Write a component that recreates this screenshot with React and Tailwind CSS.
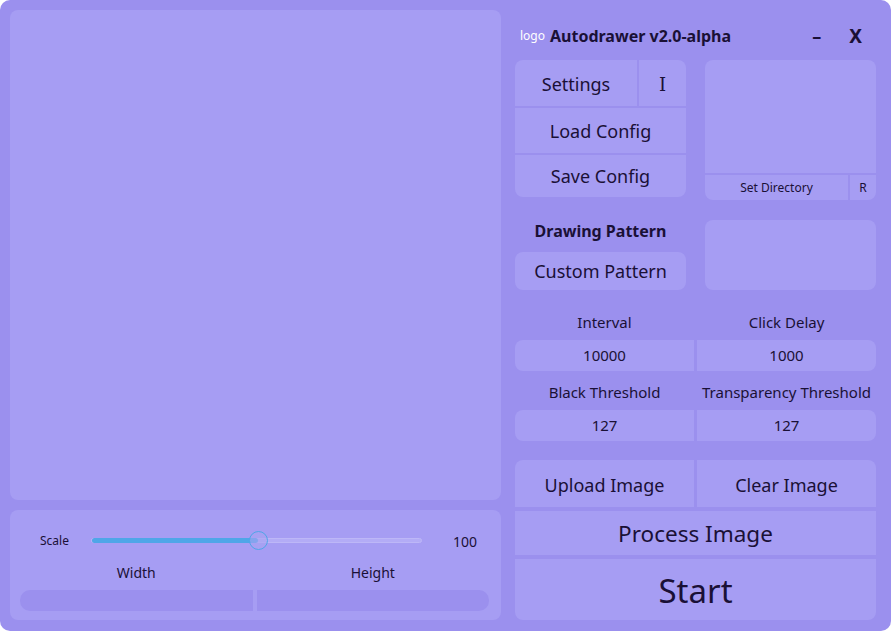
import React from 'react';

const panel = 'bg-[#a69df3]';
const ink = 'text-[#1a1036]';

const Btn = ({ className = '', children }) => (
  <div className={`${panel} flex items-center justify-center ${className}`}>{children}</div>
);

const App = () => {
  return (
    <div className="w-[891px] h-[631px] bg-white" style={{ fontFamily: '"Noto Sans", sans-serif' }}>
      <div className={`w-full h-full rounded-[10px] bg-[#9b90ee] flex pl-[10px] pt-[10px] pr-[15px] pb-[11px] gap-[14px] ${ink}`}>
        {/* left column */}
        <div className="w-[491px] flex flex-col gap-[10px]">
          <div className={`${panel} h-[490px] rounded-[8px]`} />
          <div className={`${panel} flex-1 rounded-[8px] flex flex-col`}>
            <div className="h-[61px] flex items-center pl-[30px] pr-[24px]">
              <span className="text-[12px] w-[51px] pt-[1px]">Scale</span>
              <div className="relative w-[331px] h-[5px] rounded-full bg-[#b3acf6] border border-[#bdb7f7]">
                <div className="absolute left-0 top-[-1px] h-[5px] w-[166px] rounded-full bg-[#4fa6e8]" />
                <div className="absolute left-[157px] top-[-8px] w-[19px] h-[19px] rounded-full border-[1.5px] border-[#4fa6e8] bg-[#a9a3f2]/60" />
              </div>
              <span className="ml-auto text-[14px] pt-[1px]">100</span>
            </div>
            <div className="grid grid-cols-2 gap-[4px] pl-[10px] pr-[12px]">
              <div className="text-center text-[14px] leading-[20px] mt-[-8px]">Width</div>
              <div className="text-center text-[14px] leading-[20px] mt-[-8px]">Height</div>
              <div className="h-[21px] mt-[3px] bg-[#9b90ee] rounded-l-[10px]" />
              <div className="h-[21px] mt-[3px] bg-[#9b90ee] rounded-r-[10px]" />
            </div>
          </div>
        </div>

        {/* right column */}
        <div className="w-[361px] flex flex-col">
          <div className="h-[50px] flex items-center pt-[2px] pl-[5px]">
            <span className="text-[12px] text-white mr-[5px]">logo</span>
            <span className="text-[16px] font-bold">Autodrawer v2.0-alpha</span>
            <span className="ml-auto text-[18px] font-bold mr-[28px]">–</span>
            <span className="text-[19px] font-bold mr-[14px]">X</span>
          </div>

          <div className="flex gap-[19px] h-[140px]">
            <div className="w-[171px] flex flex-col gap-[2px]">
              <div className="flex gap-[2px] h-[46px]">
                <Btn className="w-[122px] rounded-tl-[8px] text-[18px] pt-[2px]">Settings</Btn>
                <Btn className="flex-1 rounded-tr-[8px] text-[18px] pt-[2px]">
                  <span style={{ fontFamily: '"DejaVu Serif", serif' }}>I</span>
                </Btn>
              </div>
              <Btn className="h-[45px] text-[18px] pt-[2px]">Load Config</Btn>
              <Btn className="h-[42px] rounded-b-[8px] text-[18px] pt-[1px]">Save Config</Btn>
            </div>
            <div className="flex-1 flex flex-col gap-[2px]">
              <div className={`${panel} h-[113px] rounded-t-[8px]`} />
              <div className="flex gap-[2px] h-[25px]">
                <Btn className="w-[143px] rounded-bl-[8px] text-[12px] pt-[1px]">Set Directory</Btn>
                <Btn className="flex-1 rounded-br-[8px] text-[12px] pt-[1px]">R</Btn>
              </div>
            </div>
          </div>

          <div className="flex gap-[19px] mt-[20px] h-[70px]">
            <div className="w-[171px] flex flex-col">
              <div className="h-[22px] flex items-center justify-center text-[16px] font-bold">Drawing Pattern</div>
              <Btn className="mt-[10px] h-[38px] rounded-[8px] text-[18px]">Custom Pattern</Btn>
            </div>
            <div className={`${panel} flex-1 rounded-[8px]`} />
          </div>

          <div className="grid grid-cols-2 gap-x-[3px] mt-[20px]">
            <div className="h-[30px] pb-[6px] flex items-center justify-center text-[15px]">Interval</div>
            <div className="h-[30px] pb-[6px] flex items-center justify-center text-[15px]">Click Delay</div>
            <Btn className="h-[31px] rounded-l-[8px] text-[15px]">10000</Btn>
            <Btn className="h-[31px] rounded-r-[8px] text-[15px]">1000</Btn>
            <div className="h-[39px] pt-[4px] flex items-center justify-center text-[15px]">Black Threshold</div>
            <div className="h-[39px] pt-[4px] flex items-center justify-center text-[15px]">Transparency Threshold</div>
            <Btn className="h-[31px] rounded-l-[8px] text-[15px]">127</Btn>
            <Btn className="h-[31px] rounded-r-[8px] text-[15px]">127</Btn>
          </div>

          <div className="flex flex-col gap-[4px] mt-[19px]">
            <div className="grid grid-cols-2 gap-[3px] h-[47px]">
              <Btn className="rounded-tl-[8px] text-[18px] pt-[3px]">Upload Image</Btn>
              <Btn className="rounded-tr-[8px] text-[18px] pt-[3px]">Clear Image</Btn>
            </div>
            <Btn className="h-[44px] text-[22.5px] pt-[2px]">Process Image</Btn>
            <Btn className="h-[61px] rounded-b-[8px] text-[33px] pt-[3px]">Start</Btn>
          </div>
        </div>
      </div>
    </div>
  );
};

export default App;
